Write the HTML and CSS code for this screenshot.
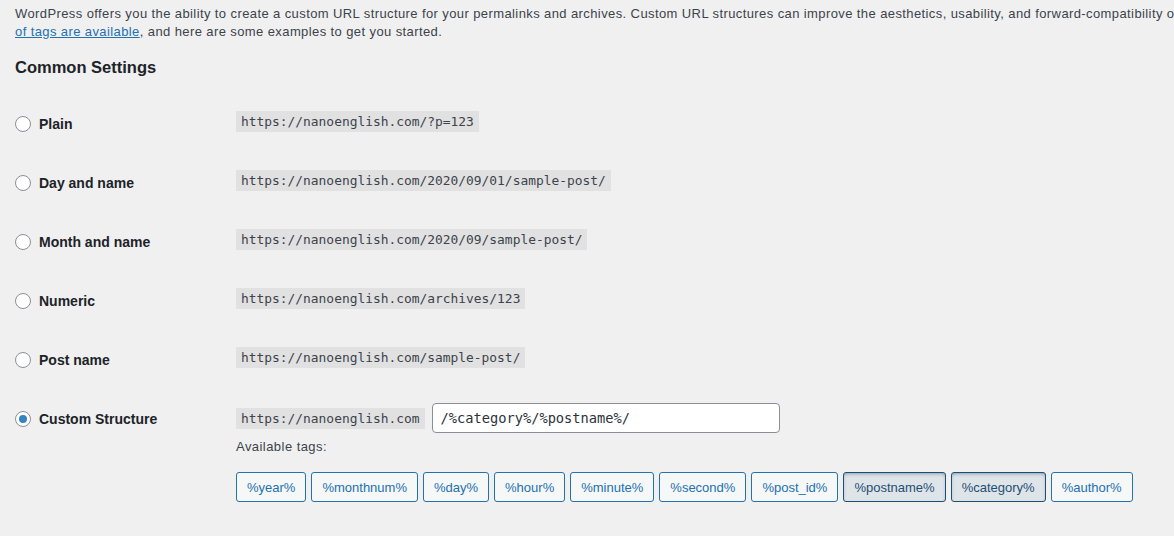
FILE: index.html
```html
<!DOCTYPE html>
<html lang="en">
<head>
  <meta charset="UTF-8" />
  <title>Permalink Settings</title>
  <link rel="stylesheet" href="styles.css">
</head>
<body>

  <div class="wrap">
    <p class="intro">WordPress offers you the ability to create a custom URL structure for your permalinks and archives. Custom URL structures can improve the aesthetics, usability, and forward-compatibility of your links. A <a href="#">number</a><br><a href="#">of tags are available</a>, and here are some examples to get you started.</p>

    <h2>Common Settings</h2>

    <div class="setting">
      <label class="choice"><span class="radio"></span>Plain</label>
      <div class="value"><code>https://nanoenglish.com/?p=123</code></div>
    </div>

    <div class="setting">
      <label class="choice"><span class="radio"></span>Day and name</label>
      <div class="value"><code>https://nanoenglish.com/2020/09/01/sample-post/</code></div>
    </div>

    <div class="setting">
      <label class="choice"><span class="radio"></span>Month and name</label>
      <div class="value"><code>https://nanoenglish.com/2020/09/sample-post/</code></div>
    </div>

    <div class="setting">
      <label class="choice"><span class="radio"></span>Numeric</label>
      <div class="value"><code>https://nanoenglish.com/archives/123</code></div>
    </div>

    <div class="setting">
      <label class="choice"><span class="radio"></span>Post name</label>
      <div class="value"><code>https://nanoenglish.com/sample-post/</code></div>
    </div>

    <div class="setting custom">
      <label class="choice"><span class="radio checked"></span>Custom Structure</label>
      <div class="value">
        <div class="custom-line">
          <code>https://nanoenglish.com</code>
          <input type="text" value="/%category%/%postname%/">
        </div>
        <p class="tags-label">Available tags:</p>
        <div class="tags">
          <button>%year%</button>
          <button>%monthnum%</button>
          <button>%day%</button>
          <button>%hour%</button>
          <button>%minute%</button>
          <button>%second%</button>
          <button>%post_id%</button>
          <button class="active">%postname%</button>
          <button class="active">%category%</button>
          <button>%author%</button>
        </div>
      </div>
    </div>
  </div>

</body>
</html>
```

FILE: styles.css
```css
html, body {
  overflow: hidden;
}

body {
  margin: 0;
  background: #f0f0f1;
  color: #1d2327;
  font-family: 'Liberation Sans', Arial, sans-serif;
  font-size: 13px;
}

.wrap {
  padding: 0 15px;
}

.intro {
  margin: 5px 0 0;
  line-height: 18px;
  letter-spacing: 0.4px;
  color: #3c434a;
  white-space: nowrap;
}

.intro a {
  color: #2271b1;
}

h2 {
  margin: 15px 0 15px;
  font-size: 16.5px;
  line-height: 22px;
  font-weight: 600;
  color: #1d2327;
}

.setting {
  display: grid;
  grid-template-columns: 221px 1fr;
  align-items: start;
  padding: 18px 0;
}

.choice {
  display: flex;
  align-items: center;
  gap: 8px;
  height: 21px;
  margin-top: 2px;
  font-size: 14px;
  font-weight: 600;
}

.radio {
  width: 14px;
  height: 14px;
  border: 1px solid #8c8f94;
  border-radius: 50%;
  background: #fff;
  display: flex;
  align-items: center;
  justify-content: center;
}

.radio.checked::before {
  content: "";
  width: 8px;
  height: 8px;
  border-radius: 50%;
  background: #3582c4;
}

code {
  display: inline-block;
  padding: 3px 5px;
  line-height: 15px;
  background: rgba(0, 0, 0, 0.06);
  font-family: 'DejaVu Sans Mono', 'Liberation Mono', monospace;
  font-size: 12.9px;
  color: #3c434a;
}

.custom {
  padding-top: 15px;
}

.custom .choice {
  height: 30px;
  margin-top: 1px;
}

.custom-line {
  display: flex;
  align-items: center;
  gap: 7px;
}

.custom-line input {
  width: 348px;
  height: 30px;
  box-sizing: border-box;
  border: 1px solid #8c8f94;
  border-radius: 4px;
  padding: 0 8px;
  background: #fff;
  color: #2c3338;
  font-family: 'DejaVu Sans Mono', 'Liberation Mono', monospace;
  font-size: 13.7px;
}

.tags-label {
  margin: 5px 0 16px;
  line-height: 18px;
  letter-spacing: 0.45px;
  color: #3c434a;
}

.tags {
  display: flex;
  gap: 5px;
}

.tags button {
  height: 30px;
  padding: 0 10px;
  border: 1px solid #2271b1;
  border-radius: 3px;
  background: #f6f7f7;
  color: #2271b1;
  font-family: 'Liberation Sans', Arial, sans-serif;
  font-size: 13px;
}

.tags button.active {
  background: #dfe4e8;
  border-color: #1d4f75;
  color: #1d4f75;
  box-shadow: inset 0 2px 5px -3px #1d4f75;
}
```
